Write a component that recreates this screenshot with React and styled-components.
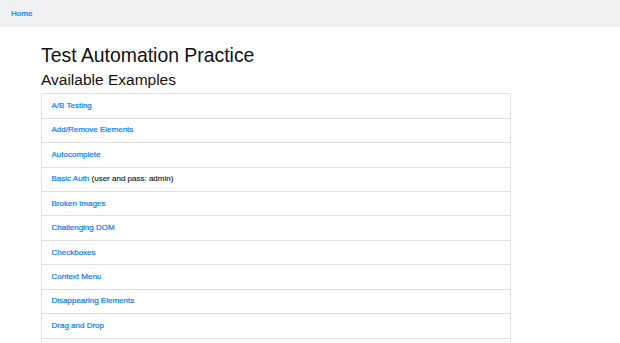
import React from "react";
import styled, { createGlobalStyle } from "styled-components";

const Global = createGlobalStyle`
  html, body { margin: 0; padding: 0; background: #fff; }
  body { font-family: "Liberation Sans", Arial, sans-serif; color: #212529; }
`;

const Nav = styled.nav`
  height: 27px;
  background: #f0f1f3;
  display: flex;
  align-items: center;
  padding: 0 11px;
  box-sizing: border-box;
`;

const NavLink = styled.a`
  color: #007bff;
  font-size: 8px;
  text-decoration: none;
  line-height: 12px;
  -webkit-text-stroke: 0.2px #007bff;
`;

const Main = styled.main`
  padding: 16px 0 0 41px;
`;

const Title = styled.h1`
  margin: 0 0 4px;
  font-size: 19.4px;
  font-weight: 500;
  line-height: 24px;
  color: #111;
`;

const Subtitle = styled.h2`
  margin: -1px 0 4px;
  font-size: 15.5px;
  font-weight: 500;
  line-height: 19.2px;
  color: #111;
`;

const List = styled.ul`
  list-style: none;
  margin: 0;
  padding: 0;
  width: 470px;
  display: flex;
  flex-direction: column;
`;

const Item = styled.li`
  border: 1px solid #dfdfdf;
  margin-top: -1px;
  padding: 5.72px 10px 5.72px 9.5px;
  font-size: 8px;
  line-height: 12px;
  background: #fff;
  &:first-child {
    margin-top: 0;
    border-top-left-radius: 2px;
    border-top-right-radius: 2px;
  }
`;

const ItemLink = styled.a`
  color: #007bff;
  text-decoration: none;
  -webkit-text-stroke: 0.2px #007bff;
`;

const Note = styled.span`
  color: #212529;
  -webkit-text-stroke: 0.15px #212529;
`;

const examples = [
  ["A/B Testing"],
  ["Add/Remove Elements"],
  ["Autocomplete"],
  ["Basic Auth", "(user and pass: admin)"],
  ["Broken Images"],
  ["Challenging DOM"],
  ["Checkboxes"],
  ["Context Menu"],
  ["Disappearing Elements"],
  ["Drag and Drop"],
  ["Dropdown"],
  ["Dynamic Content"],
];

export default function App() {
  return (
    <>
      <Global />
      <Nav>
        <NavLink href="#">Home</NavLink>
      </Nav>
      <Main>
        <Title>Test Automation Practice</Title>
        <Subtitle>Available Examples</Subtitle>
        <List>
          {examples.map(([name, note]) => (
            <Item key={name}>
              <ItemLink href="#">{name}</ItemLink>
              {note && <Note> {note}</Note>}
            </Item>
          ))}
        </List>
      </Main>
    </>
  );
}
